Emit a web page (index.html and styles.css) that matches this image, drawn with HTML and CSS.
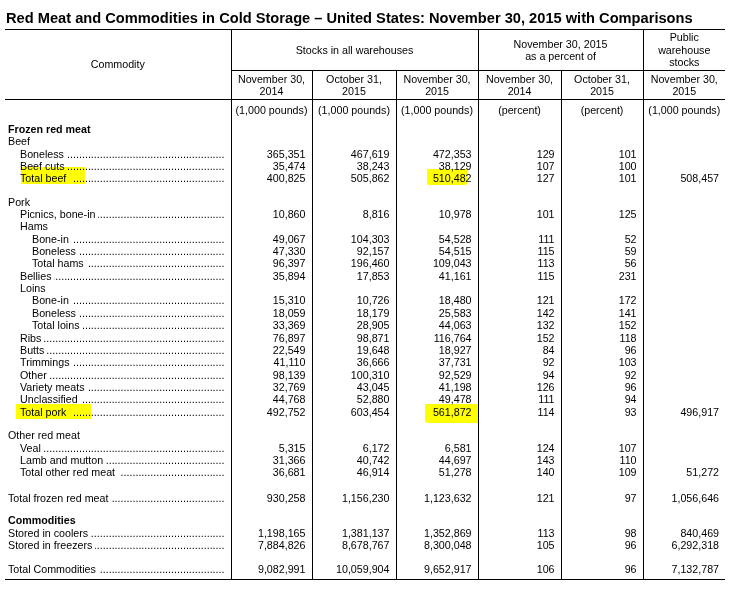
FILE: index.html
```html
<!DOCTYPE html>
<html lang="en">
<head>
<meta charset="utf-8">
<title>Red Meat and Commodities in Cold Storage</title>
<link rel="stylesheet" href="styles.css">
</head>
<body>
<div class="page">
  <h1 class="title">Red Meat and Commodities in Cold Storage – United States: November 30, 2015 with Comparisons</h1>
  <table class="cs">
    <colgroup>
      <col class="w-com"><col class="w-a"><col class="w-b"><col class="w-c"><col class="w-d"><col class="w-e"><col class="w-f">
    </colgroup>
    <thead>
      <tr class="h1r">
        <th rowspan="2" class="com-h">Commodity</th>
        <th colspan="3">Stocks in all warehouses</th>
        <th colspan="2">November 30, 2015<br>as a percent of</th>
        <th>Public<br>warehouse<br>stocks</th>
      </tr>
      <tr class="h2r">
        <th>November 30,<br>2014</th>
        <th>October 31,<br>2015</th>
        <th>November 30,<br>2015</th>
        <th>November 30,<br>2014</th>
        <th>October 31,<br>2015</th>
        <th>November 30,<br>2015</th>
      </tr>
      <tr class="units">
        <th></th>
        <th>(1,000 pounds)</th>
        <th>(1,000 pounds)</th>
        <th>(1,000 pounds)</th>
        <th>(percent)</th>
        <th>(percent)</th>
        <th>(1,000 pounds)</th>
      </tr>
    </thead>
    <tbody>
      <tr><td class="c l0 b">Frozen red meat</td><td></td><td></td><td></td><td></td><td></td><td></td></tr>
      <tr><td class="c l0">Beef</td><td></td><td></td><td></td><td></td><td></td><td></td></tr>
      <tr><td class="c l1"><div class="lbl"><span>Boneless</span><i class="dots"></i></div></td><td>365,351</td><td>467,619</td><td>472,353</td><td>129</td><td>101</td><td></td></tr>
      <tr><td class="c l1"><div class="lbl"><span>Beef cuts</span><i class="dots"></i></div></td><td>35,474</td><td>38,243</td><td>38,129</td><td>107</td><td>100</td><td></td></tr>
      <tr><td class="c l1"><div class="lbl"><span>Total beef&nbsp;</span><i class="dots"></i></div></td><td>400,825</td><td>505,862</td><td>510,482</td><td>127</td><td>101</td><td>508,457</td></tr>
      <tr class="sp sp-a"><td></td><td></td><td></td><td></td><td></td><td></td><td></td></tr>
      <tr><td class="c l0">Pork</td><td></td><td></td><td></td><td></td><td></td><td></td></tr>
      <tr><td class="c l1"><div class="lbl"><span>Picnics, bone-in</span><i class="dots"></i></div></td><td>10,860</td><td>8,816</td><td>10,978</td><td>101</td><td>125</td><td></td></tr>
      <tr><td class="c l1">Hams</td><td></td><td></td><td></td><td></td><td></td><td></td></tr>
      <tr><td class="c l2"><div class="lbl"><span>Bone-in</span><i class="dots"></i></div></td><td>49,067</td><td>104,303</td><td>54,528</td><td>111</td><td>52</td><td></td></tr>
      <tr><td class="c l2"><div class="lbl"><span>Boneless</span><i class="dots"></i></div></td><td>47,330</td><td>92,157</td><td>54,515</td><td>115</td><td>59</td><td></td></tr>
      <tr><td class="c l2"><div class="lbl"><span>Total hams</span><i class="dots"></i></div></td><td>96,397</td><td>196,460</td><td>109,043</td><td>113</td><td>56</td><td></td></tr>
      <tr><td class="c l1"><div class="lbl"><span>Bellies</span><i class="dots"></i></div></td><td>35,894</td><td>17,853</td><td>41,161</td><td>115</td><td>231</td><td></td></tr>
      <tr><td class="c l1">Loins</td><td></td><td></td><td></td><td></td><td></td><td></td></tr>
      <tr><td class="c l2"><div class="lbl"><span>Bone-in</span><i class="dots"></i></div></td><td>15,310</td><td>10,726</td><td>18,480</td><td>121</td><td>172</td><td></td></tr>
      <tr><td class="c l2"><div class="lbl"><span>Boneless</span><i class="dots"></i></div></td><td>18,059</td><td>18,179</td><td>25,583</td><td>142</td><td>141</td><td></td></tr>
      <tr><td class="c l2"><div class="lbl"><span>Total loins</span><i class="dots"></i></div></td><td>33,369</td><td>28,905</td><td>44,063</td><td>132</td><td>152</td><td></td></tr>
      <tr><td class="c l1"><div class="lbl"><span>Ribs</span><i class="dots"></i></div></td><td>76,897</td><td>98,871</td><td>116,764</td><td>152</td><td>118</td><td></td></tr>
      <tr><td class="c l1"><div class="lbl"><span>Butts</span><i class="dots"></i></div></td><td>22,549</td><td>19,648</td><td>18,927</td><td>84</td><td>96</td><td></td></tr>
      <tr><td class="c l1"><div class="lbl"><span>Trimmings</span><i class="dots"></i></div></td><td>41,110</td><td>36,666</td><td>37,731</td><td>92</td><td>103</td><td></td></tr>
      <tr><td class="c l1"><div class="lbl"><span>Other</span><i class="dots"></i></div></td><td>98,139</td><td>100,310</td><td>92,529</td><td>94</td><td>92</td><td></td></tr>
      <tr><td class="c l1"><div class="lbl"><span>Variety meats</span><i class="dots"></i></div></td><td>32,769</td><td>43,045</td><td>41,198</td><td>126</td><td>96</td><td></td></tr>
      <tr><td class="c l1"><div class="lbl"><span>Unclassified</span><i class="dots"></i></div></td><td>44,768</td><td>52,880</td><td>49,478</td><td>111</td><td>94</td><td></td></tr>
      <tr><td class="c l1"><div class="lbl"><span>Total pork&nbsp;</span><i class="dots"></i></div></td><td>492,752</td><td>603,454</td><td>561,872</td><td>114</td><td>93</td><td>496,917</td></tr>
      <tr class="sp sp-b"><td></td><td></td><td></td><td></td><td></td><td></td><td></td></tr>
      <tr><td class="c l0">Other red meat</td><td></td><td></td><td></td><td></td><td></td><td></td></tr>
      <tr><td class="c l1"><div class="lbl"><span>Veal</span><i class="dots"></i></div></td><td>5,315</td><td>6,172</td><td>6,581</td><td>124</td><td>107</td><td></td></tr>
      <tr><td class="c l1"><div class="lbl"><span>Lamb and mutton</span><i class="dots"></i></div></td><td>31,366</td><td>40,742</td><td>44,697</td><td>143</td><td>110</td><td></td></tr>
      <tr><td class="c l1"><div class="lbl"><span>Total other red meat&nbsp;</span><i class="dots"></i></div></td><td>36,681</td><td>46,914</td><td>51,278</td><td>140</td><td>109</td><td>51,272</td></tr>
      <tr class="sp sp-c"><td></td><td></td><td></td><td></td><td></td><td></td><td></td></tr>
      <tr><td class="c l0"><div class="lbl"><span>Total frozen red meat</span><i class="dots"></i></div></td><td>930,258</td><td>1,156,230</td><td>1,123,632</td><td>121</td><td>97</td><td>1,056,646</td></tr>
      <tr class="sp sp-d"><td></td><td></td><td></td><td></td><td></td><td></td><td></td></tr>
      <tr><td class="c l0 b">Commodities</td><td></td><td></td><td></td><td></td><td></td><td></td></tr>
      <tr><td class="c l0"><div class="lbl"><span>Stored in coolers</span><i class="dots"></i></div></td><td>1,198,165</td><td>1,381,137</td><td>1,352,869</td><td>113</td><td>98</td><td>840,469</td></tr>
      <tr><td class="c l0"><div class="lbl"><span>Stored in freezers</span><i class="dots"></i></div></td><td>7,884,826</td><td>8,678,767</td><td>8,300,048</td><td>105</td><td>96</td><td>6,292,318</td></tr>
      <tr class="sp sp-e"><td></td><td></td><td></td><td></td><td></td><td></td><td></td></tr>
      <tr><td class="c l0"><div class="lbl"><span>Total Commodities</span><i class="dots"></i></div></td><td>9,082,991</td><td>10,059,904</td><td>9,652,917</td><td>106</td><td>96</td><td>7,132,787</td></tr>
      <tr class="sp sp-end"><td></td><td></td><td></td><td></td><td></td><td></td><td></td></tr>
    </tbody>
  </table>
  <div class="hl hl-beef"></div>
  <div class="hl hl-beefnum"></div>
  <div class="hl hl-pork"></div>
  <div class="hl hl-porknum"></div>
</div>
</body>
</html>
```

FILE: styles.css
```css
html, body {
  margin: 0;
  padding: 0;
  background: #fff;
}

.page {
  position: relative;
  width: 746px;
  height: 593px;
  font-family: "Liberation Sans", Arial, sans-serif;
  color: #000;
}

.title {
  margin: 0 0 2px 0;
  padding: 10px 0 0 6px;
  font-size: 14.65px;
  line-height: 17px;
  font-weight: 700;
  white-space: nowrap;
}

.cs {
  margin-left: 5px;
  width: 720px;
  table-layout: fixed;
  border-collapse: collapse;
  font-size: 10.7px;
  line-height: 12.35px;
  border-top: 1px solid #000;
  border-bottom: 1px solid #000;
}

.w-com { width: 226px; }
.w-a { width: 81px; }
.w-b { width: 84px; }
.w-c { width: 82px; }
.w-d { width: 83px; }
.w-e { width: 82px; }
.w-f { width: 82px; }

.cs th {
  font-weight: 400;
  text-align: center;
  vertical-align: middle;
  padding: 0;
  border-left: 1px solid #000;
}

.cs th:first-child {
  border-left: 0;
}

.h1r th {
  height: 40px;
  border-bottom: 1px solid #000;
}

.h1r th.com-h {
  border-left: 0;
}

.h2r th {
  height: 28px;
  border-bottom: 1px solid #000;
}

.h2r th:first-child {
  border-left: 1px solid #000;
}

.units th {
  height: 19px;
  padding-top: 4px;
  vertical-align: top;
}

.cs td {
  padding: 0 6px 0 0;
  height: 12.35px;
  text-align: right;
  white-space: nowrap;
  border-left: 1px solid #000;
  vertical-align: top;
}

.cs td:first-child {
  border-left: 0;
}

.cs td.c {
  text-align: left;
  padding-right: 6px;
}

.l0 { padding-left: 3px !important; }
.l1 { padding-left: 15px !important; }
.l2 { padding-left: 27px !important; }
.b { font-weight: 700; }

.lbl {
  display: flex;
  align-items: baseline;
}

.lbl span {
  white-space: nowrap;
  flex: none;
}

.dots {
  flex: 1;
  min-width: 0;
  overflow: hidden;
  direction: rtl;
  white-space: nowrap;
  font-style: normal;
  margin-left: 3px;
}

.dots::after {
  content: "..........................................................................................";
}

.cs tr.sp td { height: 11px; }
.cs tr.sp-a td { height: 11px; }
.cs tr.sp-b td { height: 11.3px; }
.cs tr.sp-c td { height: 13px; }
.cs tr.sp-d td { height: 10.5px; }
.cs tr.sp-e td { height: 12px; }
.cs tr.sp-end td { height: 3px; }

.hl {
  position: absolute;
  background: #ffff00;
  mix-blend-mode: multiply;
}

.hl-beef { left: 21px; top: 167px; width: 64px; height: 17px; }
.hl-beefnum { left: 427px; top: 169px; width: 40px; height: 16px; border-radius: 1px 0 2px 2px; }
.hl-pork { left: 16px; top: 404px; width: 75px; height: 15px; }
.hl-porknum { left: 425px; top: 404px; width: 54px; height: 19px; border-radius: 0 0 1px 3px; }
```
